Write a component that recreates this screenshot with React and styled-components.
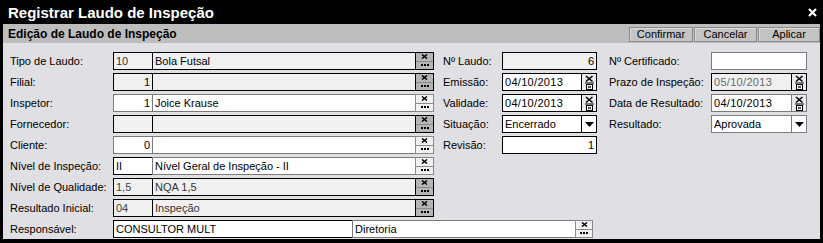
import React from 'react';
import styled, { createGlobalStyle } from 'styled-components';

const GlobalStyle = createGlobalStyle`
  html, body {
    margin: 0;
    padding: 0;
    background: #000;
  }
  body {
    font-family: "Liberation Sans", Arial, sans-serif;
  }
`;

const Window = styled.div`
  width: 823px;
  height: 243px;
  background: #000;
  display: flex;
  flex-direction: column;
  box-sizing: border-box;
`;

const TitleBar = styled.div`
  height: 24px;
  padding: 0 6px 0 8px;
  display: flex;
  align-items: center;
  justify-content: space-between;
  color: #fff;
  font-weight: bold;
  font-size: 15px;
`;

const Body = styled.div`
  flex: 1;
  margin: 0 3px 4px 3px;
  background: #e0dfe3;
  display: flex;
  flex-direction: column;
`;

const Header = styled.div`
  height: 19px;
  background: #bdbdbd;
  display: flex;
  align-items: center;
  justify-content: space-between;
  padding-left: 5px;
`;

const HeaderTitle = styled.div`
  font-weight: bold;
  font-size: 12px;
  color: #000;
`;

const Actions = styled.div`
  display: flex;
  align-self: flex-end;
  gap: 1px;
  margin-bottom: 1px;
`;

const ActionButton = styled.button`
  box-sizing: border-box;
  width: ${(p) => p.$w}px;
  height: 15px;
  padding: 0;
  margin: 0;
  border: 1px solid #8a8a8a;
  box-shadow: inset 1px 1px 0 #dadada;
  background: #c4c4c4;
  font-family: "Liberation Sans", Arial, sans-serif;
  font-size: 11px;
  color: #000;
  line-height: 13px;
`;

const Content = styled.div`
  padding: 9px 0 0 7px;
  display: flex;
  flex-direction: column;
  gap: 3px;
`;

const Columns = styled.div`
  display: flex;
  align-items: flex-start;
`;

const Column = styled.div`
  width: ${(p) => p.$w}px;
  margin-left: ${(p) => p.$gap || 0}px;
  display: flex;
  flex-direction: column;
  gap: 3px;
`;

const Row = styled.div`
  height: 18px;
  display: flex;
  align-items: stretch;
`;

const Label = styled.div`
  width: ${(p) => p.$w}px;
  flex-shrink: 0;
  display: flex;
  align-items: center;
  font-size: 11px;
  color: #000;
  white-space: nowrap;
`;

const Box = styled.div`
  box-sizing: border-box;
  width: ${(p) => p.$w}px;
  flex-shrink: 0;
  margin-left: ${(p) => (p.$join ? -1 : 0)}px;
  border: 1px solid ${(p) => (p.$dark ? '#000' : '#7a7a7a')};
  background: ${(p) => (p.$off ? '#f0f0f0' : '#fff')};
  color: ${(p) => p.$color || '#000'};
  display: flex;
  align-items: center;
  justify-content: ${(p) => (p.$right ? 'flex-end' : 'flex-start')};
  padding: 0 ${(p) => (p.$pad ?? 2)}px;
  font-size: 11px;
  white-space: nowrap;
  overflow: hidden;
`;

const BoxText = styled.span`
  flex: 1;
  padding-left: 1px;
  letter-spacing: ${(p) => (p.$wide ? '0.3px' : '0')};
`;

const LookupButtons = styled.div`
  box-sizing: border-box;
  width: ${(p) => p.$w || 19}px;
  flex-shrink: 0;
  margin-left: -1px;
  border: 1px solid ${(p) => (p.$dark ? '#000' : '#8a8a8a')};
  display: flex;
  flex-direction: column;
`;

const LookupHalf = styled.div`
  flex: 1;
  display: flex;
  align-items: center;
  justify-content: center;
  background: ${(p) => (p.$dark ? '#b5b5b5' : '#f2f2f2')};
  & + & {
    border-top: 1px solid ${(p) => (p.$dark ? '#000' : '#8a8a8a')};
  }
`;

const SideButton = styled.div`
  width: 15px;
  align-self: stretch;
  margin-right: -2px;
  border-left: 1px solid ${(p) => (p.$dark ? '#000' : '#7a7a7a')};
  background: ${(p) => (p.$plain ? '#fff' : '#ececec')};
  display: flex;
  align-items: center;
  justify-content: center;
`;

const ClearIcon = () => (
  <svg width="7" height="5" viewBox="0 0 7 5">
    <path d="M1 0.5 L6 4.5 M6 0.5 L1 4.5" stroke="#000" strokeWidth="1.5" />
  </svg>
);

const DotsIcon = () => (
  <svg width="8" height="2" viewBox="0 0 8 2">
    <rect x="0" y="0" width="2" height="2" fill="#000" />
    <rect x="3" y="0" width="2" height="2" fill="#000" />
    <rect x="6" y="0" width="2" height="2" fill="#000" />
  </svg>
);

const DateIcon = () => (
  <svg width="11" height="15" viewBox="0 0 11 15">
    <path d="M2 1 L8.5 6.5 M8.5 1 L2 6.5" stroke="#000" strokeWidth="1.6" />
    <path d="M1 8 H10" stroke="#000" strokeWidth="1" />
    <rect x="2.5" y="9.5" width="6" height="5" fill="#fff" stroke="#000" strokeWidth="1" />
    <path d="M4 11 L7 13 M7 11 L4 13" stroke="#000" strokeWidth="0.8" />
  </svg>
);

const ArrowIcon = () => (
  <svg width="9" height="5" viewBox="0 0 9 5">
    <path d="M0 0 H9 L4.5 5 Z" fill="#000" />
  </svg>
);

const CloseIcon = () => (
  <svg width="9" height="9" viewBox="0 0 9 9">
    <path d="M1 1 L8 8 M8 1 L1 8" stroke="#fff" strokeWidth="2.2" />
  </svg>
);

const Lookup = ({ dark, w }) => (
  <LookupButtons $dark={dark} $w={w}>
    <LookupHalf $dark={dark}><ClearIcon /></LookupHalf>
    <LookupHalf $dark={dark}><DotsIcon /></LookupHalf>
  </LookupButtons>
);

const leftRows = [
  { label: 'Tipo de Laudo:', code: '10', desc: 'Bola Futsal', off: true, dark: true, codeColor: '#333' },
  { label: 'Filial:', code: '1', right: true, desc: '', off: true, dark: true },
  { label: 'Inspetor:', code: '1', right: true, desc: 'Joice Krause' },
  { label: 'Fornecedor:', code: '', desc: '', off: true, dark: true },
  { label: 'Cliente:', code: '0', right: true, desc: '' },
  { label: 'Nível de Inspeção:', code: 'II', desc: 'Nível Geral de Inspeção - II', codeDark: true },
  { label: 'Nível de Qualidade:', code: '1,5', desc: 'NQA 1,5', off: true, dark: true, codeColor: '#444', descColor: '#333' },
  { label: 'Resultado Inicial:', code: '04', desc: 'Inspeção', off: true, dark: true, codeColor: '#444', descColor: '#333' },
];

const DateField = ({ value, w, dark, off, color }) => (
  <Box $w={w} $dark={dark} $off={off} $color={color} $pad={1}>
    <BoxText $wide>{value}</BoxText>
    <SideButton $dark={dark}><DateIcon /></SideButton>
  </Box>
);

const SelectField = ({ value, w, dark }) => (
  <Box $w={w} $dark={dark} $pad={1}>
    <BoxText>{value}</BoxText>
    <SideButton $dark={dark} $plain><ArrowIcon /></SideButton>
  </Box>
);

export default function App() {
  return (
    <>
      <GlobalStyle />
      <Window>
        <TitleBar>
          <span>Registrar Laudo de Inspeção</span>
          <CloseIcon />
        </TitleBar>
        <Body>
          <Header>
            <HeaderTitle>Edição de Laudo de Inspeção</HeaderTitle>
            <Actions>
              <ActionButton $w={64}>Confirmar</ActionButton>
              <ActionButton $w={63}>Cancelar</ActionButton>
              <ActionButton $w={62}>Aplicar</ActionButton>
            </Actions>
          </Header>
          <Content>
            <Columns>
              <Column $w={422}>
                {leftRows.map((r) => (
                  <Row key={r.label}>
                    <Label $w={103}>{r.label}</Label>
                    <Box $w={40} $off={r.off} $dark={r.dark || r.codeDark} $right={r.right} $color={r.codeColor}>
                      {r.code}
                    </Box>
                    <Box $w={264} $join $off={r.off} $dark={r.dark} $color={r.descColor}>
                      {r.desc}
                    </Box>
                    <Lookup dark={r.dark} />
                  </Row>
                ))}
              </Column>
              <Column $w={154} $gap={11}>
                <Row>
                  <Label $w={59}>Nº Laudo:</Label>
                  <Box $w={95} $off $dark $right>6</Box>
                </Row>
                <Row>
                  <Label $w={59}>Emissão:</Label>
                  <DateField w={95} dark value="04/10/2013" />
                </Row>
                <Row>
                  <Label $w={59}>Validade:</Label>
                  <DateField w={95} dark value="04/10/2013" />
                </Row>
                <Row>
                  <Label $w={59}>Situação:</Label>
                  <SelectField w={95} dark value="Encerrado" />
                </Row>
                <Row>
                  <Label $w={59}>Revisão:</Label>
                  <Box $w={95} $dark $right>1</Box>
                </Row>
              </Column>
              <Column $w={198} $gap={12}>
                <Row>
                  <Label $w={102}>Nº Certificado:</Label>
                  <Box $w={96} />
                </Row>
                <Row>
                  <Label $w={102}>Prazo de Inspeção:</Label>
                  <DateField w={96} dark off color="#6a6a6a" value="05/10/2013" />
                </Row>
                <Row>
                  <Label $w={102}>Data de Resultado:</Label>
                  <DateField w={96} value="04/10/2013" />
                </Row>
                <Row>
                  <Label $w={102}>Resultado:</Label>
                  <SelectField w={96} value="Aprovada" />
                </Row>
              </Column>
            </Columns>
            <Row>
              <Label $w={103}>Responsável:</Label>
              <Box $w={240} $dark>CONSULTOR MULT</Box>
              <Box $w={224} $join>Diretoria</Box>
              <Lookup w={18} />
            </Row>
          </Content>
        </Body>
      </Window>
    </>
  );
}
